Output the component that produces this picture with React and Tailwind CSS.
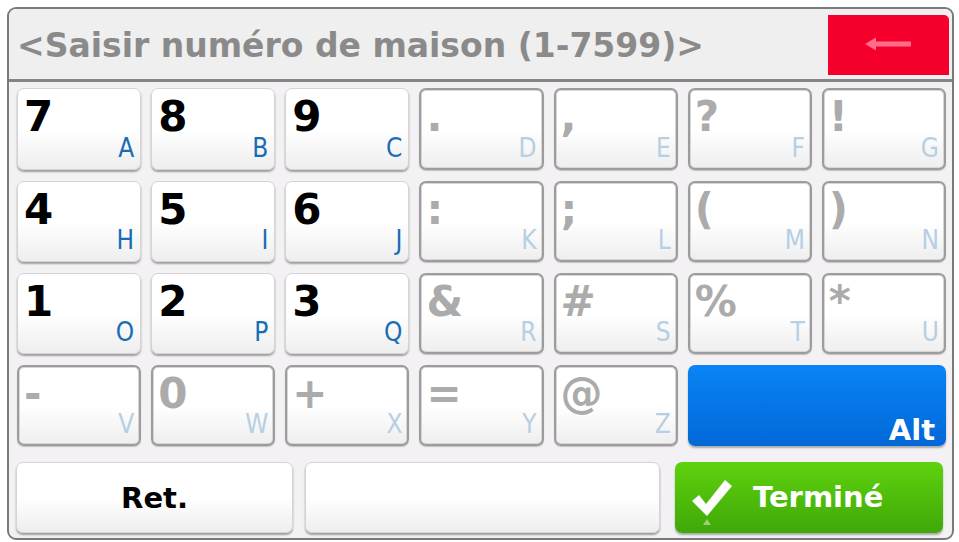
import React from 'react';

const rows = [
  [['7', 'A', 1], ['8', 'B', 1], ['9', 'C', 1], ['.', 'D', 0], [',', 'E', 0], ['?', 'F', 0], ['!', 'G', 0]],
  [['4', 'H', 1], ['5', 'I', 1], ['6', 'J', 1], [':', 'K', 0], [';', 'L', 0], ['(', 'M', 0], [')', 'N', 0]],
  [['1', 'O', 1], ['2', 'P', 1], ['3', 'Q', 1], ['&', 'R', 0], ['#', 'S', 0], ['%', 'T', 0], ['*', 'U', 0]],
];

const lastRow = [['-', 'V'], ['0', 'W'], ['+', 'X'], ['=', 'Y'], ['@', 'Z']];

function Key({ main, letter, on, h }) {
  return (
    <div
      className={
        on
          ? 'relative rounded-[7px] border border-[#d4d4d4] bg-gradient-to-b from-white from-50% to-[#eeeeee] shadow-[0_2px_2px_rgba(0,0,0,0.35)]'
          : 'relative rounded-[7px] border-2 border-[#9c9c9c] bg-gradient-to-b from-white from-50% to-[#eeeeee] shadow-[inset_0_0_0_1px_#d6d6d6,0_1px_1px_rgba(0,0,0,0.2)]'
      }
      style={{ height: h }}
    >
      <span
        className={
          on
            ? 'absolute left-[6px] top-[7px] text-[42px] leading-none font-bold text-black'
            : 'absolute left-[5px] top-[6px] text-[42px] leading-none font-bold text-[#ababab]'
        }
      >
        {main}
      </span>
      <span
        className={
          on
            ? 'absolute right-[6px] bottom-[8px] text-[26px] leading-none text-[#1a6db4] [font-family:"DejaVu_Sans_Condensed","DejaVu_Sans",sans-serif]'
            : 'absolute right-[5px] bottom-[7px] text-[26px] leading-none text-[#b6cfe3] [font-family:"DejaVu_Sans_Condensed","DejaVu_Sans",sans-serif]'
        }
      >
        {letter}
      </span>
    </div>
  );
}

export default function App() {
  return (
    <div className="w-[959px] h-[542px] bg-white [font-family:'DejaVu_Sans',sans-serif] pt-[7px] pl-[7px]">
      <div className="w-[947px] h-[533px] rounded-[9px] border-2 border-[#7a7a7a] bg-[#f3f1f3] overflow-hidden flex flex-col">
        {/* Header */}
        <div className="h-[73px] shrink-0 bg-[#efefef] border-b-[3px] border-[#858585] flex items-start justify-between pl-[8px] pr-[3px]">
          <span className="mt-[20px] text-[33px] leading-none font-bold text-[#8a8a8a]">
            &lt;Saisir numéro de maison (1-7599)&gt;
          </span>
          <div className="mt-[6px] w-[121px] h-[60px] bg-[#f5002d] rounded-tr-[5px] flex items-center justify-center">
            <svg width="48" height="16" viewBox="0 0 48 16" className="mr-[2px] mb-[2px]">
              <path d="M1 8 L12 1.5 L12 5.5 L47 5.5 L47 10.5 L12 10.5 L12 14.5 Z" fill="#ff6d89" />
            </svg>
          </div>
        </div>

        {/* Keys */}
        <div className="flex flex-col pl-[8px] pr-[6px] pt-[6px] gap-[11px]">
          {rows.map((r, i) => (
            <div key={i} className="grid grid-cols-7 gap-x-[10px]">
              {r.map(([m, l, on]) => (
                <Key key={l} main={m} letter={l} on={on} h={i === 0 ? 82 : 81} />
              ))}
            </div>
          ))}
          <div className="grid grid-cols-7 gap-x-[10px]">
            {lastRow.map(([m, l]) => (
              <Key key={l} main={m} letter={l} on={0} h={81} />
            ))}
            <div className="col-span-2 relative h-[81px] rounded-[7px] bg-gradient-to-b from-[#0a84f5] to-[#0368d8] shadow-[0_2px_2px_rgba(0,0,0,0.3)]">
              <span className="absolute right-[11px] bottom-[1px] text-[29px] leading-none font-bold text-white">Alt</span>
            </div>
          </div>
        </div>

        <div className="flex pl-[7px] pt-[16px]">
          <div className="w-[277px] h-[71px] rounded-[7px] border border-[#d4d4d4] bg-gradient-to-b from-white from-50% to-[#eeeeee] shadow-[0_2px_2px_rgba(0,0,0,0.35)] flex items-center justify-center">
            <span className="text-[29px] leading-none font-bold text-black mt-[2px]">Ret.</span>
          </div>
          <div className="ml-[12px] w-[355px] h-[71px] rounded-[7px] border border-[#d4d4d4] bg-gradient-to-b from-white from-50% to-[#eeeeee] shadow-[0_2px_2px_rgba(0,0,0,0.35)]" />
          <div className="ml-[15px] w-[268px] h-[71px] rounded-[7px] bg-gradient-to-b from-[#5fd20e] to-[#3fa808] shadow-[0_2px_2px_rgba(0,0,0,0.3)] flex items-center pl-[16px]">
            <svg width="42" height="48" viewBox="0 0 42 48" className="mr-[20px] mt-[10px]">
              <path d="M1 22 L8 16 L15 25 L34 1 L41 7 L16 37 Z" fill="white" />
              <path d="M12 46 L16 40 L20 46 Z" fill="white" opacity="0.45" />
            </svg>
            <span className="text-[29px] leading-none font-bold text-white">Terminé</span>
          </div>
        </div>
      </div>
    </div>
  );
}
